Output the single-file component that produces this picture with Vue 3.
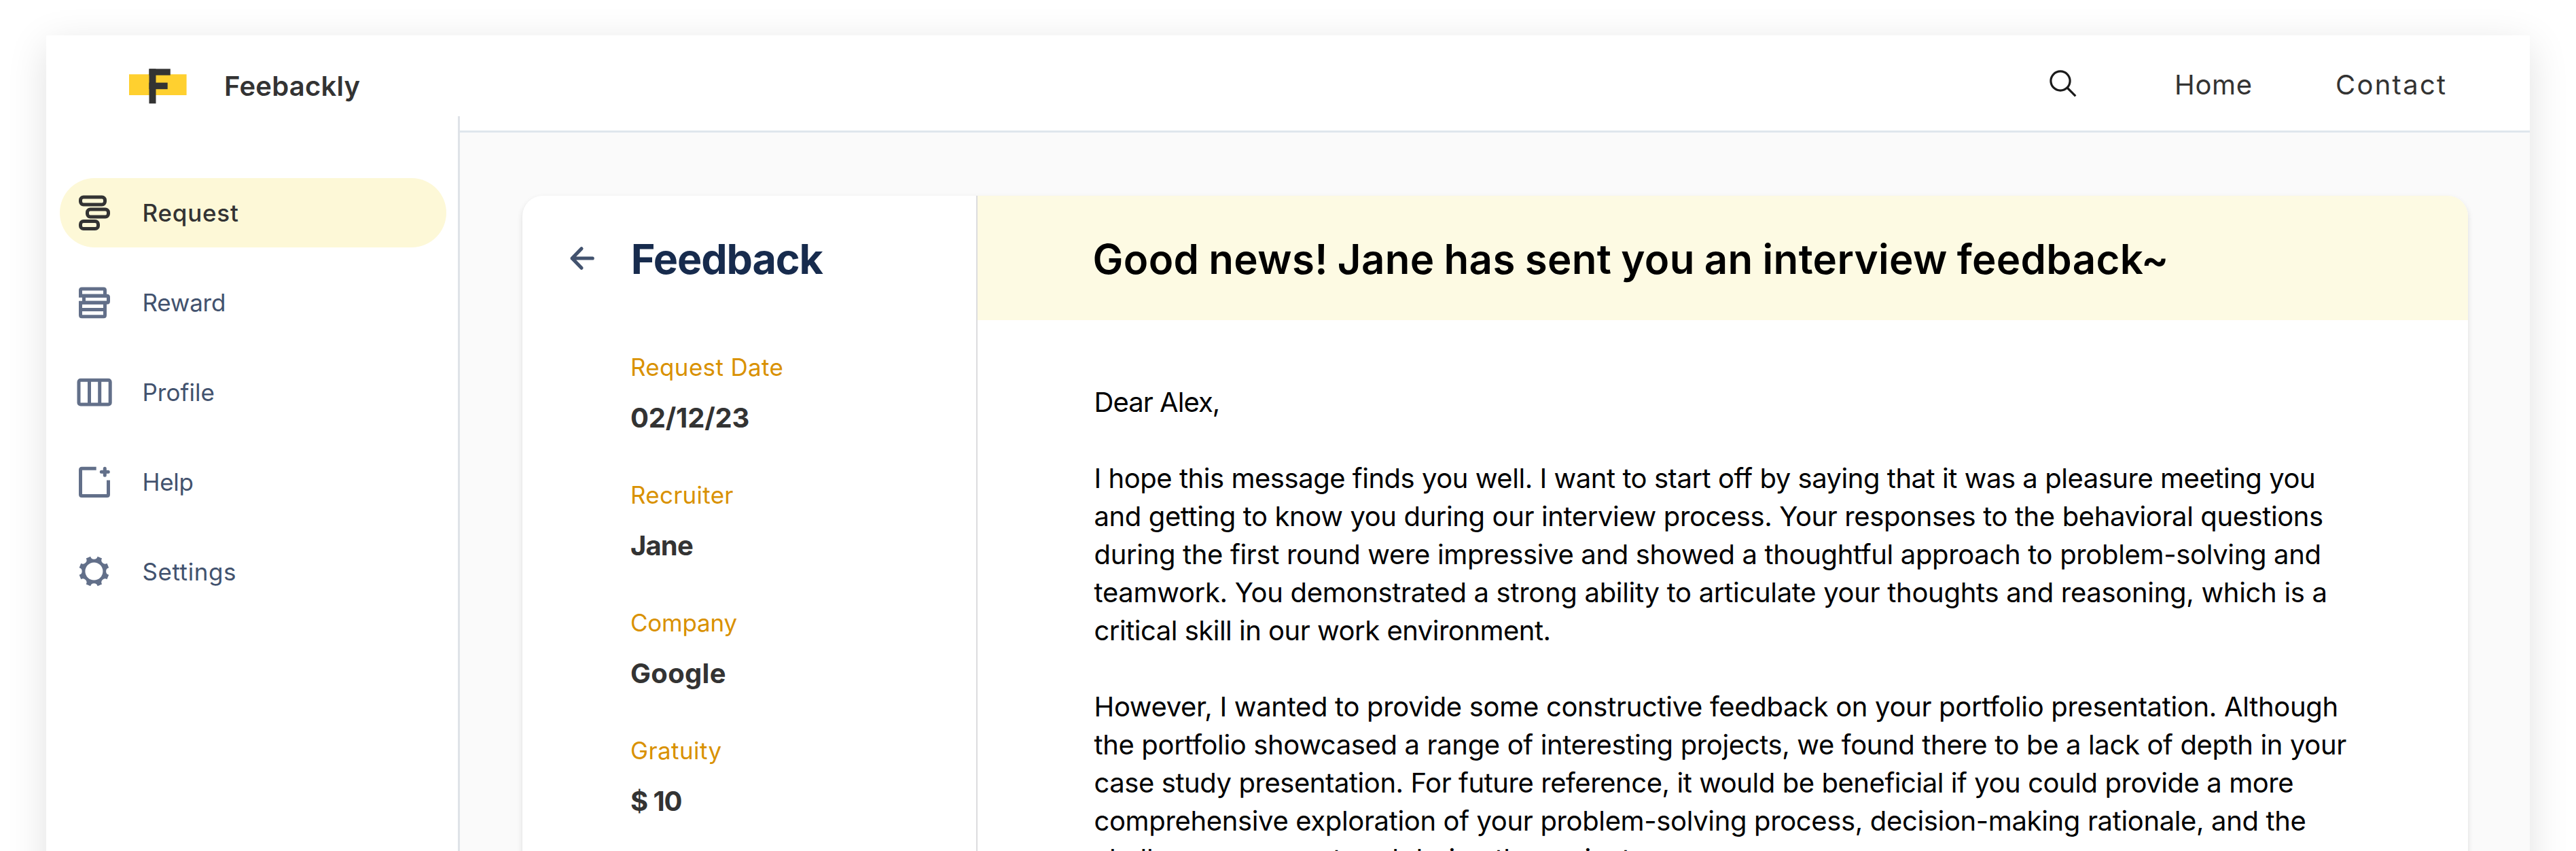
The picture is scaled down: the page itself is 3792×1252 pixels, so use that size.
<script setup>
const nav = [
  { id: 'request', label: 'Request', track: 0.79, active: true },
  { id: 'reward', label: 'Reward', track: -0.215 },
  { id: 'profile', label: 'Profile', track: 0.043 },
  { id: 'help', label: 'Help', track: -0.264 },
  { id: 'settings', label: 'Settings', track: 0.582 },
]

const details = [
  { label: 'Request Date', labelTrack: 0.333, value: '02/12/23', valueTrack: -0.2 },
  { label: 'Recruiter', labelTrack: 0.253, value: 'Jane', valueTrack: -0.868 },
  { label: 'Company', labelTrack: -0.234, value: 'Google', valueTrack: 0.301 },
  { label: 'Gratuity', labelTrack: 0.386, value: '$ 10', valueTrack: -1.1 },
]

const paragraphs = [
  [{ text: 'Dear Alex,', track: -0.95 }],
  [
    { text: 'I hope this message finds you well. I want to start off by saying that it was a pleasure meeting you', track: -0.464 },
    { text: 'and getting to know you during our interview process. Your responses to the behavioral questions', track: -0.393 },
    { text: 'during the first round were impressive and showed a thoughtful approach to problem-solving and', track: -0.34 },
    { text: 'teamwork. You demonstrated a strong ability to articulate your thoughts and reasoning, which is a', track: -0.304 },
    { text: 'critical skill in our work environment.', track: -0.501 },
  ],
  [
    { text: 'However, I wanted to provide some constructive feedback on your portfolio presentation. Although', track: -0.325 },
    { text: 'the portfolio showcased a range of interesting projects, we found there to be a lack of depth in your', track: -0.36 },
    { text: 'case study presentation. For future reference, it would be beneficial if you could provide a more', track: -0.433 },
    { text: 'comprehensive exploration of your problem-solving process, decision-making rationale, and the', track: -0.357 },
    { text: 'challenges encountered during the project.', track: -0.3 },
  ],
]

const spacing = (track) => ({ letterSpacing: `${track}px` })

// Eight-toothed gear outline with scooped gaps between the teeth
const gear = (() => {
  const cx = 26.4
  const cy = 26.5
  const r = 22.4
  const at = (deg) => {
    const a = (deg * Math.PI) / 180
    return `${(cx + r * Math.sin(a)).toFixed(2)} ${(cy - r * Math.cos(a)).toFixed(2)}`
  }
  let d = `M${at(13.5)}`
  for (let k = 1; k <= 8; k++) {
    d += `L${at(k * 45 - 13.5)}A5.4 5.4 0 0 0 ${at(k * 45 + 13.5)}`
  }
  return `${d}ZM${cx - 13} ${cy}a13 13 0 1 0 26 0a13 13 0 1 0 -26 0Z`
})()
</script>

<template>
  <div class="page">
    <div class="app">
      <aside class="sidebar">
        <div class="brand">
          <svg class="logo" width="86" height="52" viewBox="0 0 86 52">
            <rect x="0" y="8.3" width="84.6" height="30.7" fill="#ffd02f" />
            <g fill="#333">
              <rect x="29.5" y="0.3" width="10" height="51" />
              <rect x="29.5" y="0.3" width="31.3" height="9.4" />
              <rect x="29.5" y="20.6" width="27.2" height="9.6" />
            </g>
          </svg>
          <span class="brand-name">Feebackly</span>
        </div>
        <nav class="menu">
          <a v-for="item in nav" :key="item.id" class="menu-item" :class="{ active: item.active }">
            <svg class="menu-icon" width="54" height="54" viewBox="0 0 54 54" fill="none" stroke="currentColor" stroke-width="5">
              <template v-if="item.id === 'request'">
                <rect x="6.5" y="4" width="36" height="11" rx="4.4" />
                <rect x="16.5" y="21.9" width="31" height="11" rx="4.4" />
                <rect x="6.5" y="39.6" width="26" height="11" rx="4.4" />
              </template>
              <template v-else-if="item.id === 'reward'">
                <path d="M4 17.2H42.5V9q0-2-2-2h-32q-2 0-2 2V19.7" />
                <path d="M11.5 17.2H45.5q2 0 2 2v6q0 2-2 2H11.5Z" />
                <path d="M4 27.2H42.5V45.7q0 2-2 2h-32q-2 0-2-2V24.7M6.5 37.4H42.5" />
              </template>
              <template v-else-if="item.id === 'profile'">
                <rect x="4" y="9.3" width="46.2" height="35.7" rx="2.6" />
                <path d="M19.5 9.3V45M34.7 9.3V45" />
              </template>
              <template v-else-if="item.id === 'help'">
                <path d="M29.7 7.2H8.5q-2 0-2 2V45.6q0 2 2 2H45.5q2 0 2-2V24.5" />
                <path d="M42.3 7.2V17.2M37.3 12.2H47.3" stroke-linecap="round" />
              </template>
              <path v-else :d="gear" fill="currentColor" fill-rule="evenodd" stroke="none" />
            </svg>
            <span class="menu-label" :style="spacing(item.track)">{{ item.label }}</span>
          </a>
        </nav>
      </aside>

      <div class="main">
        <header class="topbar">
          <svg class="search" width="42" height="42" viewBox="0 0 42 42" fill="none" stroke="#1a1a1a" stroke-width="3.2">
            <circle cx="17" cy="17" r="14.1" />
            <path d="M27 27L39.3 39.3" />
          </svg>
          <a class="link home">Home</a>
          <a class="link contact">Contact</a>
        </header>

        <section class="content">
          <article class="card">
            <div class="summary">
              <div class="summary-head">
                <svg class="back" width="40" height="40" viewBox="0 0 40 40" fill="none" stroke="#42526e" stroke-width="5.2" stroke-linecap="round" stroke-linejoin="round">
                  <path d="M35.2 20H5.2M19 5.8L5.2 20L19 34.2" />
                </svg>
                <h1 class="title">Feedback</h1>
              </div>
              <dl class="details">
                <div v-for="d in details" :key="d.label" class="detail">
                  <dt :style="spacing(d.labelTrack)">{{ d.label }}</dt>
                  <dd :style="spacing(d.valueTrack)">{{ d.value }}</dd>
                </div>
              </dl>
            </div>
            <div class="message">
              <h2 class="banner">Good news! Jane has sent you an interview feedback~</h2>
              <div class="letter">
                <p v-for="(lines, i) in paragraphs" :key="i">
                  <span v-for="line in lines" :key="line.text" class="line" :style="spacing(line.track)">{{ line.text }}</span>
                </p>
              </div>
            </div>
          </article>
        </section>
      </div>
    </div>
  </div>
</template>

<style>
html,
body {
  margin: 0;
  background: #fff;
}
</style>

<style scoped>
.page {
  box-sizing: border-box;
  width: 3792px;
  height: 1252px;
  padding: 52px 68px 0;
  overflow: hidden;
  background: #fff;
}

.app {
  display: flex;
  height: 1400px;
  background: #fff;
  box-shadow: 0 14px 56px rgba(0, 0, 0, 0.12);
  font-family: Inter, 'Liberation Sans', sans-serif;
  color: #333;
}

.sidebar {
  display: flex;
  flex-direction: column;
  width: 609px;
  flex: none;
}

.brand {
  display: flex;
  align-items: flex-start;
  height: 119px;
  padding-left: 122px;
  box-sizing: border-box;
}

.logo {
  margin-top: 48.5px;
}

.brand-name {
  margin: 46.5px 0 0 54px;
  font-size: 40px;
  line-height: 56px;
  font-weight: 600;
  letter-spacing: 0.209px;
}

.menu {
  display: flex;
  flex: 1;
  flex-direction: column;
  gap: 30px;
  box-sizing: border-box;
  padding: 90.5px 17px 0 20px;
  border-right: 3px solid #dfe3e8;
}

.menu-item {
  display: flex;
  align-items: center;
  height: 102px;
  padding-left: 24px;
  border-radius: 51px;
  color: #626f89;
}

.menu-label {
  margin-left: 43.4px;
  font-size: 35px;
  line-height: 50px;
  color: #42526e;
}

.menu-item.active {
  background: #fdf8d7;
  color: #333;
}

.active .menu-label {
  font-weight: 500;
  color: #333;
}

.main {
  display: flex;
  flex: 1;
  flex-direction: column;
}

.topbar {
  display: flex;
  align-items: flex-start;
  justify-content: flex-end;
  box-sizing: border-box;
  height: 143px;
  border-bottom: 3px solid #dfe6ed;
}

.search {
  margin: 49.7px 143px 0 0;
}

.link {
  margin-top: 45px;
  font-size: 40px;
  line-height: 56px;
  white-space: nowrap;
}

.home {
  width: 237px;
  letter-spacing: 0.683px;
}

.contact {
  width: 286px;
  letter-spacing: 2.262px;
}

.content {
  display: flex;
  flex: 1;
  padding: 93px 91px 0 92px;
  background: #fafafa;
}

.card {
  display: flex;
  flex: 1;
  border-radius: 30px 30px 0 0;
  background: #fff;
  box-shadow: 0 4px 8px rgba(0, 0, 0, 0.12);
}

.summary {
  box-sizing: border-box;
  width: 670px;
  flex: none;
  border-right: 2px solid #dcdcde;
}

.summary-head {
  display: flex;
  align-items: center;
  height: 183px;
  padding-left: 68px;
}

.title {
  margin: 3px 0 0 51.8px;
  font-size: 61px;
  line-height: 80px;
  font-weight: 700;
  letter-spacing: -1.1px;
  color: #172b4d;
}

.details {
  margin: 43.5px 0 0 159px;
}

.detail {
  height: 188px;
}

.detail dt {
  font-size: 35px;
  line-height: 50px;
  color: #d99100;
}

.detail dd {
  margin: 22.5px 0 0;
  font-size: 40px;
  line-height: 56px;
  font-weight: 700;
}

.message {
  flex: 1;
}

.banner {
  box-sizing: border-box;
  height: 183px;
  margin: 0;
  padding: 4px 0 0 169.5px;
  border-radius: 0 30px 0 0;
  background: #fdfae3;
  font-size: 60px;
  line-height: 179px;
  font-weight: 600;
  letter-spacing: 0.34px;
  word-spacing: -1.5px;
  color: #000;
  white-space: nowrap;
}

.letter {
  padding: 93px 0 0 171.5px;
  font-size: 40px;
  line-height: 56px;
  color: #000;
}

.letter p {
  margin: 0 0 56px;
}

.line {
  display: block;
  white-space: nowrap;
}
</style>
